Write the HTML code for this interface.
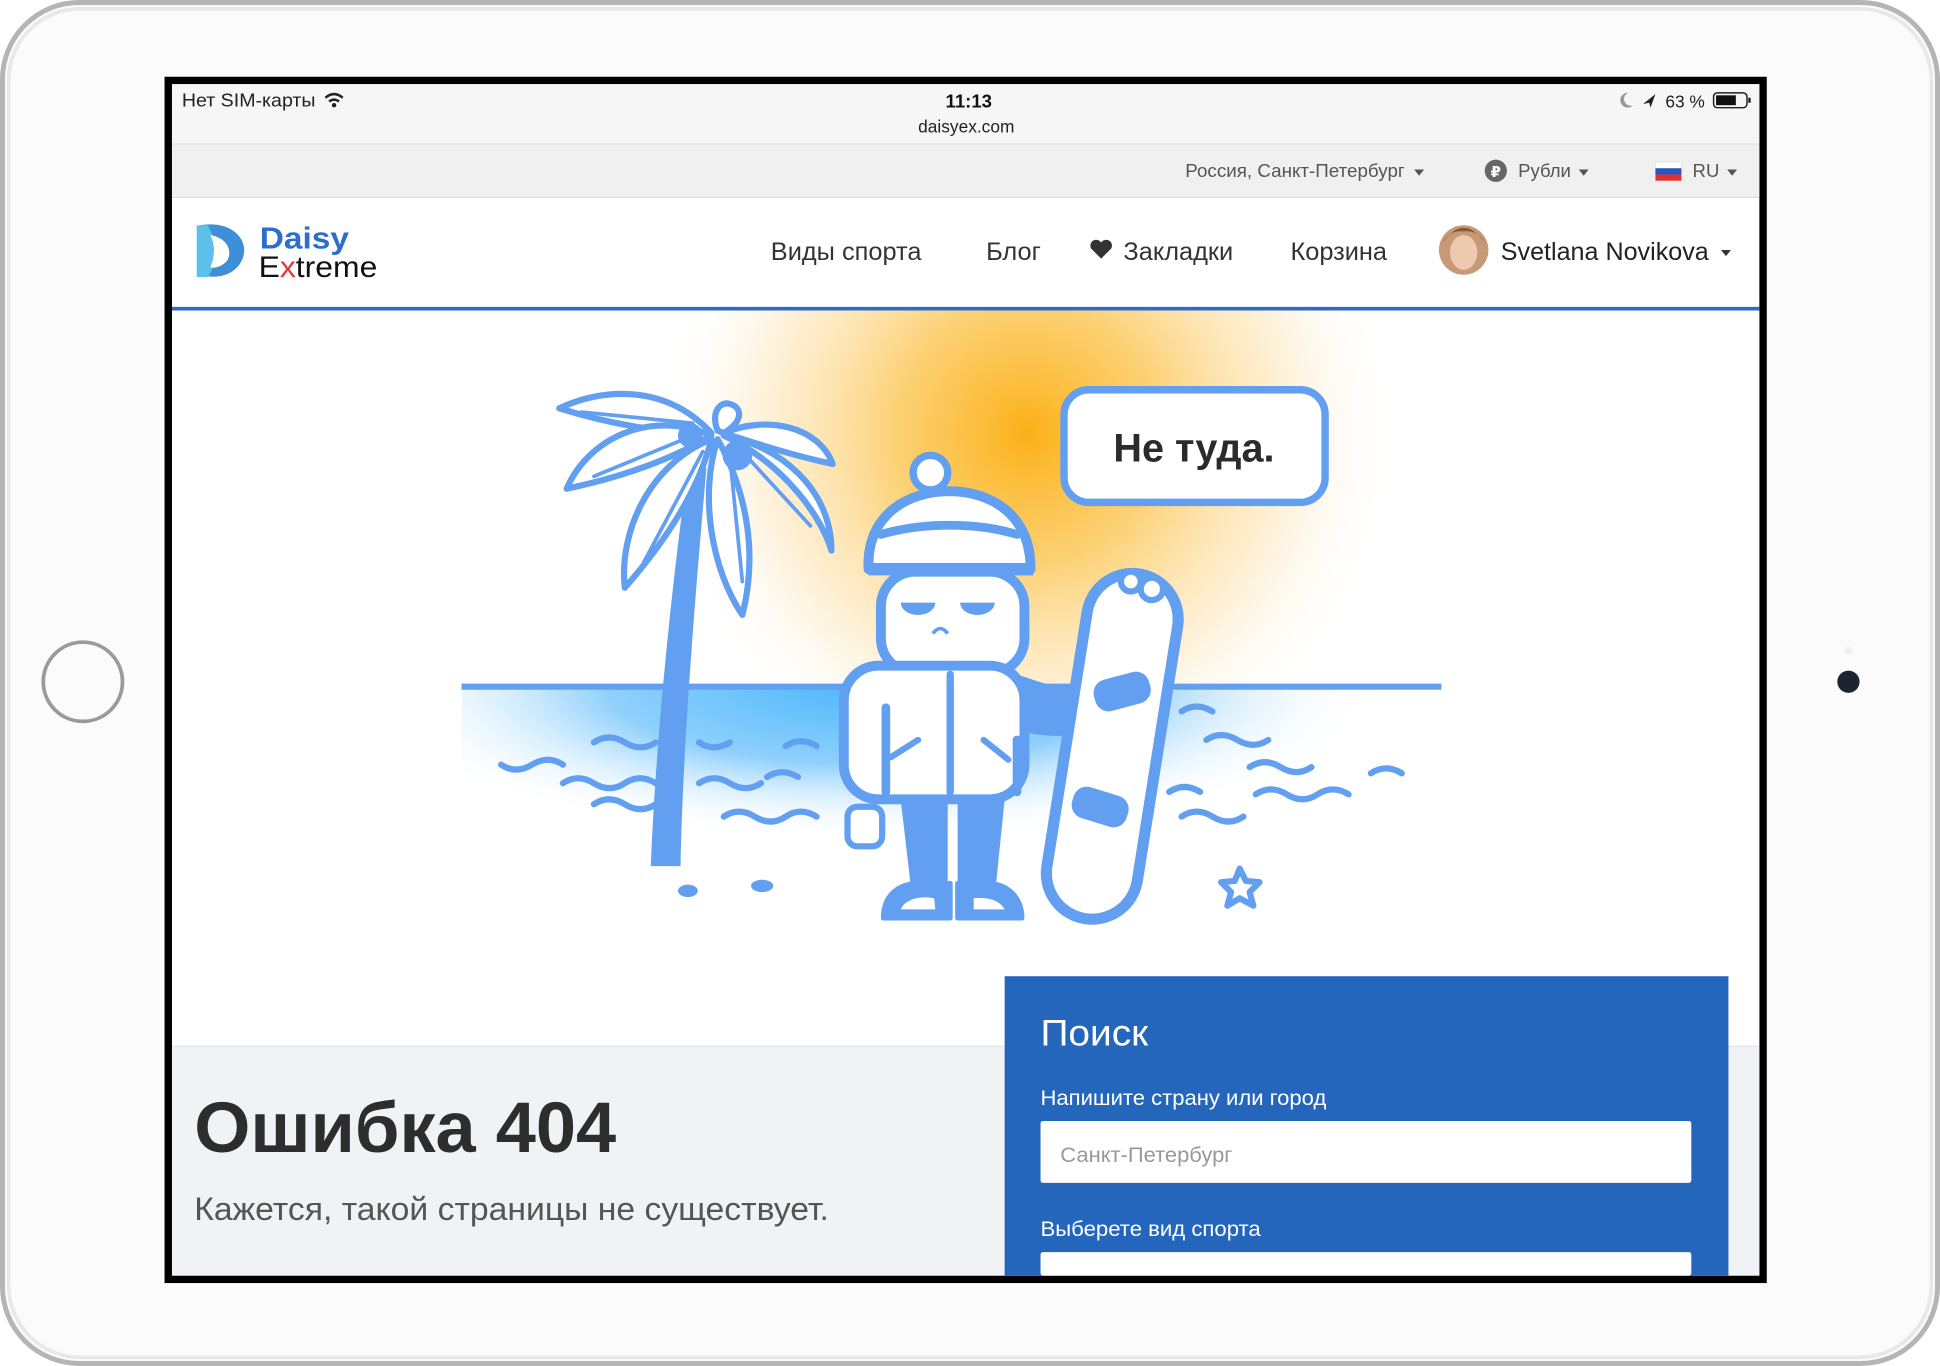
<!DOCTYPE html>
<html><head><meta charset="utf-8"><style>
html,body{margin:0;padding:0;background:#fff;width:1940px;height:1366px;overflow:hidden}
svg{display:block}
text{font-family:"Liberation Sans","DejaVu Sans",sans-serif}
</style></head><body>
<svg width="1940" height="1366" viewBox="0 0 1568 1104" xmlns="http://www.w3.org/2000/svg">
<defs>
<radialGradient id="sun" cx="830" cy="350" r="300" gradientUnits="userSpaceOnUse">
<stop offset="0" stop-color="#fbb117"/><stop offset="0.35" stop-color="#fcc85a" stop-opacity="0.85"/><stop offset="0.7" stop-color="#fde2ad" stop-opacity="0.5"/><stop offset="1" stop-color="#fff" stop-opacity="0"/>
</radialGradient>
<radialGradient id="sea" cx="700" cy="555" r="260" gradientTransform="translate(700 555) scale(1.6 0.48) translate(-700 -555)" gradientUnits="userSpaceOnUse">
<stop offset="0" stop-color="#4db8fb"/><stop offset="0.5" stop-color="#8fd0fc"/><stop offset="1" stop-color="#fff" stop-opacity="0"/>
</radialGradient>
<clipPath id="hero"><rect x="139" y="251" width="1283" height="594"/></clipPath>
<clipPath id="below"><rect x="139" y="556" width="1283" height="300"/></clipPath>
</defs>
<rect x="0" y="0" width="1568" height="1104" fill="#fff"/>
<rect x="2" y="2" width="1564" height="1100" rx="62" fill="#fbfbfb" stroke="#b5b5b5" stroke-width="4"/>
<rect x="7" y="7" width="1554" height="1090" rx="58" fill="none" stroke="#e8e8e8" stroke-width="3"/>
<circle cx="67" cy="551" r="32" fill="none" stroke="#9a9a9a" stroke-width="3"/>
<circle cx="1494" cy="551" r="9" fill="#1c2433"/>
<circle cx="1494" cy="526" r="3" fill="#eee"/>
<rect x="133" y="62" width="1295" height="975" fill="#000"/>
<rect x="139" y="68" width="1283" height="963" fill="#fff"/>
<rect x="139" y="68" width="1283" height="48" fill="#f6f6f6"/>
<line x1="139" y1="116.5" x2="1422" y2="116.5" stroke="#dcdcdc"/>
<text x="147" y="86" font-size="14.8" fill="#222" textLength="108" lengthAdjust="spacingAndGlyphs">Нет SIM-карты</text>
<path d="M263,79 q7,-6 14,0 M266,82 q4,-3 8,0" stroke="#222" stroke-width="2" fill="none"/><circle cx="270" cy="85" r="1.8" fill="#222"/>
<text x="783" y="87" font-size="15" font-weight="bold" fill="#111" text-anchor="middle">11:13</text>
<text x="781" y="107" font-size="14" fill="#222" text-anchor="middle">daisyex.com</text>
<path d="M1316,75 a6,6 0 1 0 4,10 a5,5 0 0 1 -4,-10z" fill="#999"/>
<path d="M1328,84 l10,-8 l-4,11 l-1,-4z" fill="#222"/>
<text x="1346" y="87" font-size="14" fill="#222">63 %</text>
<rect x="1385" y="75" width="27" height="12" rx="3" fill="none" stroke="#222" stroke-width="1.2"/>
<rect x="1387" y="77" width="16" height="8" fill="#111"/><rect x="1413" y="79" width="2" height="4" fill="#222"/>
<rect x="139" y="117" width="1283" height="42" fill="#f0f0f0"/>
<line x1="139" y1="159.5" x2="1422" y2="159.5" stroke="#dcdcdc"/>
<text x="958" y="143" font-size="15.2" fill="#555">Россия, Санкт-Петербург</text>
<path d="M1143,137 l8,0 l-4,5z" fill="#555"/>
<circle cx="1209" cy="138" r="9" fill="#666"/><text x="1209" y="143" font-size="12" font-weight="bold" fill="#fff" text-anchor="middle">₽</text>
<text x="1227" y="143" font-size="15" fill="#555">Рубли</text>
<path d="M1276,137 l8,0 l-4,5z" fill="#555"/>
<rect x="1338" y="131" width="21" height="5" fill="#fff" stroke="#ddd" stroke-width=".5"/><rect x="1338" y="136" width="21" height="5" fill="#2a55c6"/><rect x="1338" y="141" width="21" height="5" fill="#e0302c"/>
<text x="1368" y="143" font-size="15" fill="#555">RU</text>
<path d="M1396,137 l8,0 l-4,5z" fill="#555"/>
<path d="M162,182 C186,178 200,192 197,206 C194,220 178,227 163,222 C170,213 171,192 162,182z" fill="#3f8fd8"/>
<path d="M159,182 L168,182 C176,196 176,212 168,224 L159,224 z" fill="#5cc0ea"/>
<path d="M170,190 C183,192 188,202 184,210 C180,216 172,217 170,216 C174,206 174,198 170,190z" fill="#fff"/>
<text x="210" y="201" font-size="25" font-weight="bold" fill="#2b6fca" textLength="72" lengthAdjust="spacingAndGlyphs">Daisy</text>
<text x="209" y="224" font-size="24" fill="#111" textLength="96" lengthAdjust="spacingAndGlyphs">E<tspan fill="#e23a3a">x</tspan>treme</text>
<text x="623" y="210" font-size="20.5" fill="#333">Виды спорта</text>
<text x="797" y="210" font-size="20.5" fill="#333">Блог</text>
<path d="M890,209 l-8,-8 a4.5,4.5 0 0 1 8,-5 a4.5,4.5 0 0 1 8,5z" fill="#333"/>
<text x="908" y="210" font-size="20.5" fill="#333">Закладки</text>
<text x="1043" y="210" font-size="20.5" fill="#333">Корзина</text>
<circle cx="1183" cy="202" r="20" fill="#c69a78"/>
<ellipse cx="1183" cy="204" rx="11" ry="14" fill="#efc9ad"/>
<path d="M1166,196 q17,-24 34,0 q-5,-10 -17,-9 q-12,-1 -17,9z" fill="#8a5a34"/>
<text x="1213" y="210" font-size="20.3" fill="#222">Svetlana Novikova</text>
<path d="M1391,202 l8,0 l-4,5z" fill="#333"/>
<rect x="139" y="248" width="1283" height="3" fill="#2f6bbf"/>
<g clip-path="url(#hero)">
<rect x="139" y="251" width="1283" height="594" fill="#fff"/>
<circle cx="830" cy="350" r="300" fill="url(#sun)"/>
<rect x="373" y="556" width="792" height="200" fill="url(#sea)" clip-path="url(#below)"/>
</g>
<line x1="373" y1="555" x2="1165" y2="555" stroke="#629ff0" stroke-width="5"/>
<g fill="none" stroke="#629ff0" stroke-width="5" stroke-linecap="round">
<path d="M405,618 q12,8 25,0 t25,0"/>
<path d="M480,600 q12,-8 25,0 t25,0"/>
<path d="M455,633 q12,-8 25,0 t25,0 t25,0"/>
<path d="M480,650 q12,-8 25,0 t25,0"/>
<path d="M565,600 q12,8 25,0"/>
<path d="M565,633 q12,-8 25,0 t25,0"/>
<path d="M585,660 q12,-8 25,0 t25,0 t25,0"/>
<path d="M620,628 q12,-8 25,0"/>
<path d="M635,603 q12,-8 25,0"/>
<path d="M955,575 q12,-8 25,0"/>
<path d="M975,598 q12,-8 25,0 t25,0"/>
<path d="M1010,620 q12,-8 25,0 t25,0"/>
<path d="M1015,642 q12,-8 25,0 t25,0 t25,0"/>
<path d="M1108,625 q12,-8 25,0"/>
<path d="M955,660 q12,-8 25,0 t25,0"/>
<path d="M945,640 q12,-8 25,0"/>
</g>
<path d="M571,378 C562,480 552,600 550,700 L526,700 C530,600 542,480 556,378z" fill="#629ff0"/>
<g fill="#fff" stroke="#629ff0" stroke-width="5" stroke-linejoin="round">
<path d="M575,350 C540,312 490,312 452,330 C500,345 540,350 575,350z"/>
<path d="M575,352 C525,330 475,355 458,395 C505,385 545,370 575,352z"/>
<path d="M575,355 C525,375 500,430 505,475 C540,435 565,395 575,355z"/>
<path d="M580,355 C565,400 575,460 600,497 C612,450 605,400 580,355z"/>
<path d="M585,352 C635,375 665,420 672,445 C672,395 630,360 585,352z"/>
<path d="M585,350 C620,335 662,345 673,375 C640,368 610,358 585,350z"/>
<path d="M580,348 C575,335 580,326 588,326 C600,328 602,340 585,350z"/>
</g>
<g stroke="#629ff0" stroke-width="3" fill="none" stroke-linecap="round"><path d="M470,333 L560,342"/><path d="M480,385 L560,352"/><path d="M520,455 L568,365"/><path d="M590,370 L600,470"/><path d="M600,365 L655,425"/></g>
<circle cx="558" cy="352" r="10" fill="#629ff0"/>
<circle cx="596" cy="368" r="12" fill="#629ff0"/>
<ellipse cx="556" cy="720" rx="8" ry="5" fill="#629ff0"/>
<ellipse cx="616" cy="716" rx="9" ry="5" fill="#629ff0"/>
<rect x="860" y="315" width="211" height="91" rx="20" fill="#fff" stroke="#629ff0" stroke-width="6"/>
<text x="965" y="373" font-size="32" font-weight="bold" fill="#2b2b2b" text-anchor="middle">Не туда.</text>
<g stroke="#629ff0" stroke-width="8" stroke-linejoin="round" stroke-linecap="round">
<path d="M818,548 C840,555 855,562 875,560 L872,590 C850,592 835,590 818,585z" fill="#629ff0"/>
<path d="M702,460 C700,415 735,397 767,397 C800,397 833,415 833,460z" fill="#fff"/>
<path d="M712,432 C745,422 790,422 822,432" fill="none" stroke-width="7"/>
<circle cx="752" cy="382" r="14" fill="#fff" stroke-width="6"/>
<rect x="712" y="462" width="116" height="82" rx="28" fill="#fff"/>
<rect x="682" y="538" width="146" height="108" rx="28" fill="#fff"/>
<line x1="768" y1="545" x2="768" y2="640" stroke-width="6"/>
<line x1="716" y1="572" x2="716" y2="640" stroke-width="7"/>
<path d="M720,612 L742,598 M795,598 L815,614" stroke-width="5" fill="none"/>
<path d="M822,598 L822,640" stroke-width="7"/>
<rect x="685" y="652" width="28" height="32" rx="8" fill="#fff" stroke-width="5"/>
<path d="M730,646 L764,646 L764,715 L738,715z" fill="#629ff0" stroke-width="4"/>
<path d="M776,646 L810,646 L803,715 L776,715z" fill="#629ff0" stroke-width="4"/>
<path d="M714,742 C714,722 728,714 742,714 L768,714 L768,742z" fill="#629ff0" stroke-width="4"/>
<path d="M774,742 L774,714 L798,714 C814,714 826,725 826,742z" fill="#629ff0" stroke-width="4"/>
</g>
<path d="M728,735 C732,726 745,724 755,726 L756,735z M787,735 L787,726 C800,725 808,728 812,735z" fill="#fff"/>
<rect x="702" y="455" width="133" height="10" fill="#629ff0"/>
<path d="M728,487 a14,10 0 0 0 28,0z M776,487 a14,10 0 0 0 28,0z" fill="#629ff0"/>
<path d="M754,512 q6,-8 12,0" stroke="#629ff0" stroke-width="3" fill="none"/>
<g transform="rotate(9 898 603)">
<rect x="862" y="462" width="74" height="282" rx="37" fill="#fff" stroke="#629ff0" stroke-width="9"/>
<rect x="877" y="545" width="46" height="26" rx="11" fill="#629ff0" transform="rotate(-24 900 558)"/>
<rect x="874" y="640" width="46" height="26" rx="11" fill="#629ff0" transform="rotate(8 897 653)"/>
</g>
<circle cx="914" cy="470" r="8" fill="#fff" stroke="#629ff0" stroke-width="5"/>
<circle cx="931" cy="476" r="9" fill="#fff" stroke="#629ff0" stroke-width="5"/>
<path d="M1002,702 l5,10 l11,1 l-8,8 l3,11 l-11,-6 l-10,6 l3,-11 l-8,-8 l11,-1z" fill="#fff" stroke="#629ff0" stroke-width="5" stroke-linejoin="round"/>
<rect x="139" y="845" width="1283" height="186" fill="#f0f2f5"/>
<line x1="139" y1="845.5" x2="1422" y2="845.5" stroke="#e2e5ea"/>
<text x="157" y="931" font-size="58" font-weight="bold" fill="#2d2d2d" textLength="341" lengthAdjust="spacingAndGlyphs">Ошибка 404</text>
<text x="157" y="986" font-size="26.3" fill="#555" textLength="513" lengthAdjust="spacingAndGlyphs">Кажется, такой страницы не существует.</text>
<rect x="812" y="789" width="585" height="242" fill="#2566bd"/>
<text x="841" y="845" font-size="30" fill="#fff" textLength="87" lengthAdjust="spacingAndGlyphs">Поиск</text>
<text x="841" y="893" font-size="16.9" fill="#fff" textLength="231" lengthAdjust="spacingAndGlyphs">Напишите страну или город</text>
<rect x="841" y="906" width="526" height="50" rx="2" fill="#fff"/>
<text x="857" y="939" font-size="17.3" fill="#999" textLength="139" lengthAdjust="spacingAndGlyphs">Санкт-Петербург</text>
<text x="841" y="999" font-size="16.9" fill="#fff" textLength="178" lengthAdjust="spacingAndGlyphs">Выберете вид спорта</text>
<rect x="841" y="1012" width="526" height="19" rx="2" fill="#fff"/>
</svg>
</body></html>
